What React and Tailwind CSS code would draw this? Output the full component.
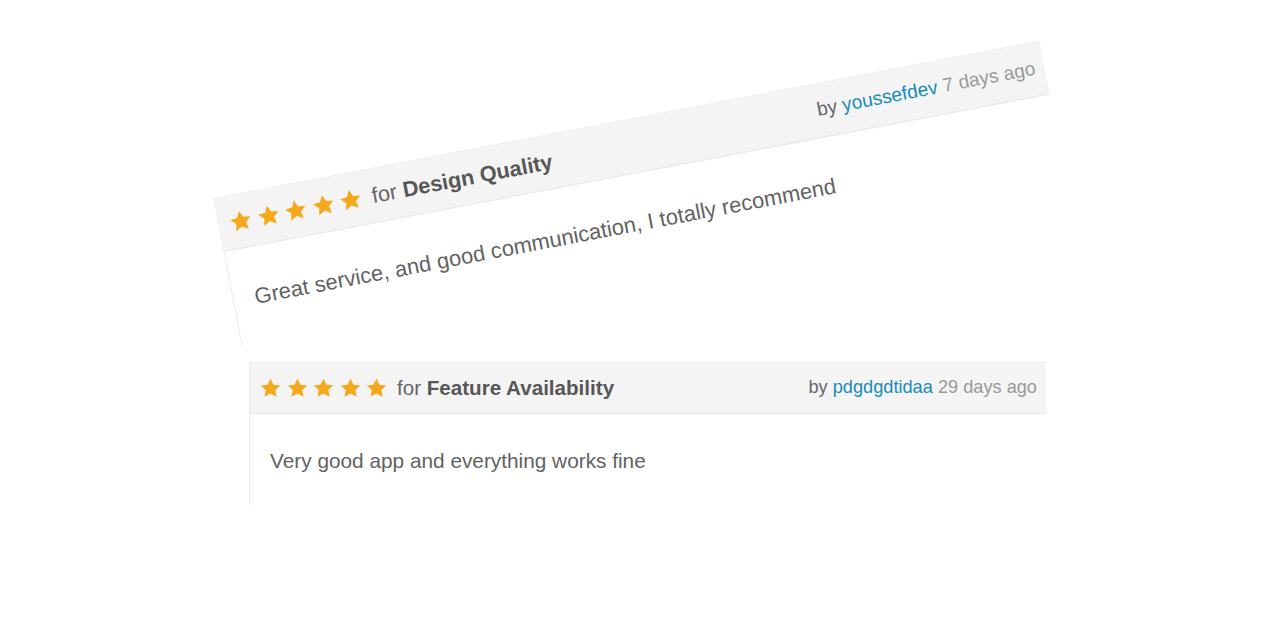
import React from "react";

function Star() {
  return (
    <svg width="21" height="20" viewBox="0 0 24 23" className="shrink-0">
      <path
        d="M12 0.6l3.4 7.1 7.8 0.9-5.8 5.3 1.6 7.7L12 17.7l-7 3.9 1.6-7.7L0.8 8.6l7.8-0.9z"
        fill="#f6a81c"
      />
    </svg>
  );
}

function Card({ category, user, when, text, className }) {
  return (
    <div className={"w-[797px] h-[143px] bg-white border-l border-t border-[#e9edf0] " + className}>
      <div className="h-[51px] bg-[#f4f4f4] border-b border-[#e2e9ee] flex items-center justify-between pl-[10px] pr-[9px]">
        <div className="flex items-center">
          <div className="flex items-center gap-[5.5px]">
            <Star />
            <Star />
            <Star />
            <Star />
            <Star />
          </div>
          <span className="ml-[10px] text-[20.6px] text-[#666666]">
            for <span className="font-bold text-[#575757]">{category}</span>
          </span>
        </div>
        <div className="text-[18.2px] text-[#666666]">
          by <span className="text-[#1a8cb8]">{user}</span>{" "}
          <span className="text-[#999999]">{when}</span>
        </div>
      </div>
      <div className="pl-[20px] pt-[31px] text-[20.8px] text-[#626262]">{text}</div>
    </div>
  );
}

export default function App() {
  return (
    <div
      className="w-[1280px] h-[640px] bg-white overflow-hidden flex flex-col"
      style={{ fontFamily: '"Liberation Sans", Arial, sans-serif' }}
    >
      <Card
        className="ml-[242px] mt-[122px] rotate-[-10.8deg] scale-[1.055]"
        category="Design Quality"
        user="youssefdev"
        when="7 days ago"
        text="Great service, and good communication, I totally recommend"
      />
      <Card
        className="ml-[249px] mt-[97px]"
        category="Feature Availability"
        user="pdgdgdtidaa"
        when="29 days ago"
        text="Very good app and everything works fine"
      />
    </div>
  );
}
